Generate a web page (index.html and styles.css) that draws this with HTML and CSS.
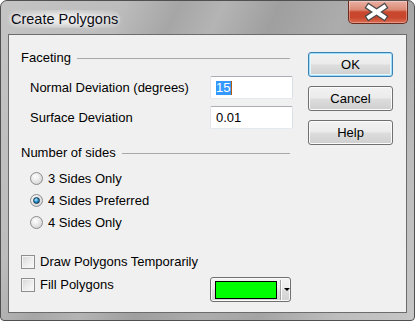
FILE: index.html
```html
<!DOCTYPE html>
<html lang="en">
<head>
  <meta charset="UTF-8" />
  <title>Create Polygons</title>
  <link rel="stylesheet" href="styles.css">
</head>
<body>
  <div class="window">
    <div class="titlebar">
      <span class="title">Create Polygons</span>
      <div class="close">
        <svg width="60" height="22" viewBox="0 0 60 22">
          <path d="M22 6 L37 16 M37 6 L22 16" stroke="#4a4a4a" stroke-width="6.5" stroke-linecap="square" fill="none"/>
          <path d="M22 6 L37 16 M37 6 L22 16" stroke="#ffffff" stroke-width="4" stroke-linecap="square" fill="none"/>
        </svg>
      </div>
    </div>

    <div class="client">
      <div class="main">
        <div class="group-title"><span>Faceting</span><i class="rule"></i></div>

        <div class="field">
          <label for="normal">Normal Deviation (degrees)</label>
          <div class="edit" id="normal"><span class="sel">15</span><span class="caret"></span></div>
        </div>
        <div class="field">
          <label for="surface">Surface Deviation</label>
          <div class="edit" id="surface">0.01</div>
        </div>

        <div class="group-title second"><span>Number of sides</span><i class="rule"></i></div>

        <div class="options">
          <div class="option"><span class="radio"></span>3 Sides Only</div>
          <div class="option"><span class="radio on"></span>4 Sides Preferred</div>
          <div class="option"><span class="radio"></span>4 Sides Only</div>
        </div>

        <div class="check-row first">
          <span class="check"></span><span>Draw Polygons Temporarily</span>
        </div>
        <div class="check-row fill">
          <div class="check-label"><span class="check"></span><span>Fill Polygons</span></div>
          <div class="color-combo">
            <span class="swatch"></span>
            <span class="sep"></span>
            <span class="arrow"></span>
          </div>
        </div>
      </div>

      <div class="buttons">
        <button class="button default">OK</button>
        <button class="button">Cancel</button>
        <button class="button">Help</button>
      </div>
    </div>
  </div>
</body>
</html>
```

FILE: styles.css
```css
body {
  margin: 0;
  padding: 0;
  font-family: 'Liberation Sans', Arial, sans-serif;
  font-size: 13px;
  color: #000;
  background: #fff;
}
.window {
  width: 415px;
  height: 321px;
  box-sizing: border-box;
  border: 1px solid #505050;
  border-radius: 7px 7px 4px 4px;
  background: linear-gradient(115deg, #c4c4c4 0%, #bcbcbc 22%, #a6a6a6 32%, #b4b4b4 40%, #9f9f9f 50%, #acacac 62%, #a4a4a4 72%, #bdbdbd 86%, #c6c6c6 100%);
  display: flex;
  flex-direction: column;
  overflow: hidden;
}
.titlebar {
  height: 33px;
  display: flex;
  justify-content: space-between;
  align-items: flex-start;
  padding: 0 5px 0 8px;
}
.title {
  margin-top: 9px;
  font-size: 14.5px;
  line-height: 18px;
  color: #0c0c14;
  padding: 0 2px;
  border-radius: 9px;
  background: radial-gradient(ellipse at center, rgba(235,235,235,0.9) 30%, rgba(220,220,220,0.5) 65%, rgba(200,200,200,0) 100%);
  text-shadow: 0 0 6px #fff;
}
.close {
  width: 60px;
  height: 23px;
  margin-right: 1px;
  box-sizing: border-box;
  border: 1px solid #6a2a1e;
  border-top: none;
  border-radius: 0 0 5px 5px;
  background: linear-gradient(#e9b0a4 0%, #dc8a76 40%, #c9472d 50%, #c8462c 75%, #dc6d52 100%);
  box-shadow: inset 0 0 0 1px rgba(255, 255, 255, 0.3);
  display: flex;
  align-items: center;
  justify-content: center;
}
.close svg {
  display: block;
  margin-left: -2px;
}
.client {
  margin: 0 7px;
  width: 399px;
  height: 279px;
  box-sizing: border-box;
  border: 1px solid #6c6c6c;
  background-color: #f0f0f0;
  display: flex;
  padding: 15px 0 0 12px;
  gap: 15px;
}
.main {
  width: 272px;
}
.group-title {
  display: flex;
  align-items: center;
  height: 16px;
  line-height: 16px;
  gap: 6px;
  margin-right: 3px;
}
.group-title .rule {
  flex: 1;
  height: 0;
  border-top: 1px solid #a9a9a9;
  margin-top: 1px;
}
.group-title.second {
  margin-top: 16px;
}
.field {
  display: flex;
  justify-content: space-between;
  align-items: center;
  height: 23px;
  margin-top: 7px;
}
.group-title + .field {
  margin-top: 10px;
}
.field label {
  margin-left: 9px;
}
.edit {
  width: 83px;
  height: 23px;
  box-sizing: border-box;
  border: 1px solid;
  border-color: #abadb3 #dbdfe6 #e3e9ef #e2e3ea;
  border-radius: 2px;
  background-color: #ffffff;
  padding-left: 5px;
  display: flex;
  align-items: center;
}
.sel {
  background-color: #3399ff;
  color: #fff;
  line-height: 14px;
  padding-right: 1px;
}
.caret {
  width: 1px;
  height: 14px;
  background-color: #b05a10;
}
.options {
  margin-top: 6px;
}
.option {
  display: flex;
  align-items: center;
  height: 22px;
  padding-left: 9px;
  gap: 5px;
}
.radio {
  width: 13px;
  height: 13px;
  box-sizing: border-box;
  border-radius: 50%;
  border: 1px solid #8a8c8e;
  background: radial-gradient(circle at 40% 35%, #ffffff 0%, #e8e8e8 45%, #c9c9c9 100%);
  display: flex;
  align-items: center;
  justify-content: center;
}
.radio.on::after {
  content: "";
  width: 7px;
  height: 7px;
  box-sizing: border-box;
  border-radius: 50%;
  border: 1px solid #16364e;
  background: radial-gradient(circle at 40% 35%, #b8ecff 0%, #2b95d2 45%, #0d4a73 100%);
}
.check-row {
  display: flex;
  align-items: center;
  gap: 5px;
}
.check-row.first {
  margin-top: 21px;
  height: 15px;
}
.check-row.fill {
  margin-top: 8px;
  justify-content: space-between;
  align-items: flex-start;
  margin-right: 2px;
}
.check-label {
  display: flex;
  align-items: center;
  gap: 5px;
  height: 15px;
}
.check {
  width: 14px;
  height: 14px;
  box-sizing: border-box;
  border: 1px solid #8e8f8f;
  background: linear-gradient(135deg, #d6d6d6 0%, #ededed 55%, #fbfbfb 100%);
  box-shadow: inset 0 0 0 1px #f4f4f4;
}
.color-combo {
  width: 81px;
  height: 25px;
  box-sizing: border-box;
  border: 1px solid #707070;
  border-radius: 3px;
  background: linear-gradient(#f3f3f3 0%, #ebebeb 48%, #dddddd 52%, #d2d2d2 100%);
  box-shadow: inset 0 0 0 1px #fafafa;
  display: flex;
  align-items: center;
  padding-left: 4px;
}
.swatch {
  width: 63px;
  height: 18px;
  box-sizing: border-box;
  border: 1px solid #000;
  background-color: #00ff00;
}
.sep {
  width: 1px;
  height: 20px;
  margin-left: 3px;
  background-color: #a5a5a5;
  box-shadow: 1px 0 0 #ffffff;
}
.arrow {
  margin-left: 3px;
  width: 0;
  height: 0;
  border-left: 3px solid transparent;
  border-right: 3px solid transparent;
  border-top: 3px solid #000;
}
.buttons {
  display: flex;
  flex-direction: column;
  gap: 9px;
  padding-top: 2px;
}
.button {
  width: 85px;
  height: 25px;
  box-sizing: border-box;
  font-family: 'Liberation Sans', Arial, sans-serif;
  font-size: 13px;
  color: #000;
  border: 1px solid #707070;
  border-radius: 3px;
  background: linear-gradient(#f2f2f2 0%, #ebebeb 48%, #dddddd 52%, #cfcfcf 100%);
  box-shadow: inset 0 0 0 1px #fbfbfb;
  padding: 0;
}
.button.default {
  border-color: #3c7fb1;
  box-shadow: inset 0 0 0 1px #9fdcf8, inset 0 0 0 2px #e6f6fd;
}
```
